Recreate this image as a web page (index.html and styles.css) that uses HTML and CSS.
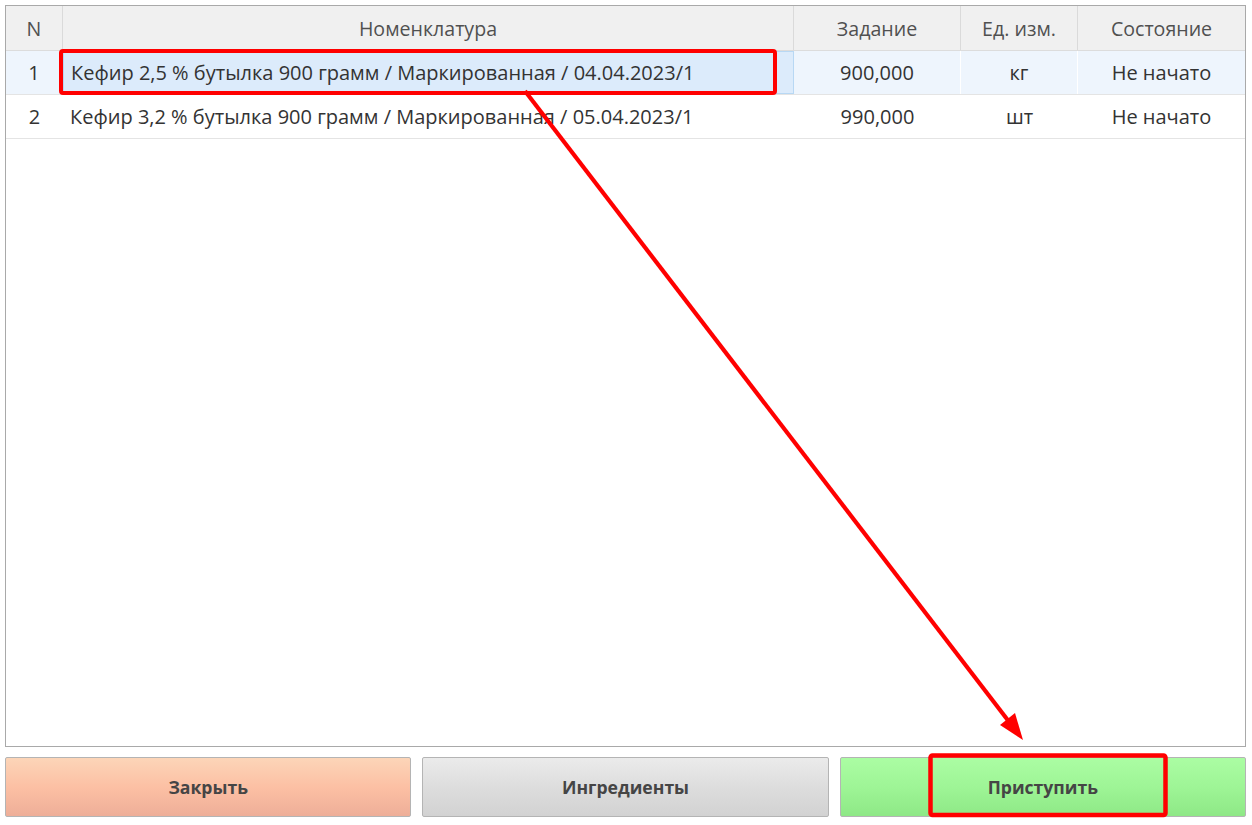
FILE: index.html
```html
<!DOCTYPE html>
<html lang="ru">
<head>
<meta charset="utf-8">
<link rel="stylesheet" href="styles.css">
</head>
<body>
<div class="page">
  <div class="grid">
    <div class="row head">
      <div class="cell c-n">N</div>
      <div class="cell c-name">Номенклатура</div>
      <div class="cell">Задание</div>
      <div class="cell">Ед. изм.</div>
      <div class="cell last">Состояние</div>
    </div>
    <div class="row sel">
      <div class="cell c-n">1</div>
      <div class="cell c-name left active">Кефир 2,5 % бутылка 900 грамм / Маркированная / 04.04.2023/1</div>
      <div class="cell">900,000</div>
      <div class="cell">кг</div>
      <div class="cell last">Не начато</div>
    </div>
    <div class="row">
      <div class="cell c-n">2</div>
      <div class="cell c-name left">Кефир 3,2 % бутылка 900 грамм / Маркированная / 05.04.2023/1</div>
      <div class="cell">990,000</div>
      <div class="cell">шт</div>
      <div class="cell last">Не начато</div>
    </div>
  </div>
  <div class="buttons">
    <button class="btn btn-close">Закрыть</button>
    <button class="btn btn-ingr">Ингредиенты</button>
    <button class="btn btn-go">Приступить</button>
  </div>
</div>
<svg class="annot" width="1252" height="825" viewBox="0 0 1252 825">
  <rect x="61" y="51" width="714" height="42" rx="2" fill="none" stroke="#ff0000" stroke-width="4"/>
  <rect x="930.5" y="755.5" width="235" height="59.5" rx="2" fill="none" stroke="#ff0000" stroke-width="4.5"/>
  <line x1="525" y1="91" x2="1010" y2="723" stroke="#ff0000" stroke-width="4.2"/>
  <polygon points="1023,740 1000,725 1015,713" fill="#ff0000"/>
</svg>
</body>
</html>
```
FILE: styles.css
```css
html, body {
  margin: 0;
  padding: 0;
  background: #ffffff;
}
body {
  font-family: "Open Sans", "Noto Sans", sans-serif;
  width: 1252px;
  height: 825px;
  overflow: hidden;
  position: relative;
}
.page {
  padding: 5px 6px 0 5px;
  display: flex;
  flex-direction: column;
  gap: 10px;
}
.grid {
  height: 740px;
  border: 1px solid #a9a9a9;
  display: flex;
  flex-direction: column;
  background: #fff;
}
.row {
  display: grid;
  grid-template-columns: 57px 731px 167px 117px 1fr;
  height: 43px;
  border-bottom: 1px solid #e4e4e4;
  color: #333;
  font-size: 20px;
}
.row.head {
  height: 44px;
  background: #f0f0f0;
  border-bottom: 1px solid #dcdcdc;
  color: #505050;
  font-size: 19.6px;
}
.cell {
  display: flex;
  align-items: center;
  justify-content: center;
  white-space: nowrap;
  box-sizing: border-box;
}
.head .cell {
  border-right: 1px solid #dadada;
}
.head .cell.last {
  border-right: none;
}
.cell.left {
  justify-content: flex-start;
  padding-left: 7px;
}
.row.sel {
  background: #eef5fd;
}
.row.sel .cell {
  border-right: 1px solid #ffffff;
}
.row.sel .cell.last {
  border-right: none;
}
.row.sel .cell.active {
  background: #dcebfb;
  border: 1px solid #b8d8f4;
}
.buttons {
  display: grid;
  grid-template-columns: 1fr 1fr 1fr;
  gap: 11px;
  height: 60px;
}
.btn {
  border: 1px solid #b4b4b4;
  border-radius: 2px;
  font-family: "Open Sans", "Noto Sans", sans-serif;
  font-weight: bold;
  font-size: 17.6px;
  color: #454545;
  padding: 0;
}
.btn-close {
  background: linear-gradient(#fcd5b8, #fcc0a4 50%, #eeae98);
}
.btn-ingr {
  background: linear-gradient(#ebebeb, #dddddd 50%, #d2d2d2);
}
.btn-go {
  background: linear-gradient(#abfda3, #9ef596 50%, #8ee886);
}
.annot {
  position: absolute;
  left: 0;
  top: 0;
  pointer-events: none;
}
```
